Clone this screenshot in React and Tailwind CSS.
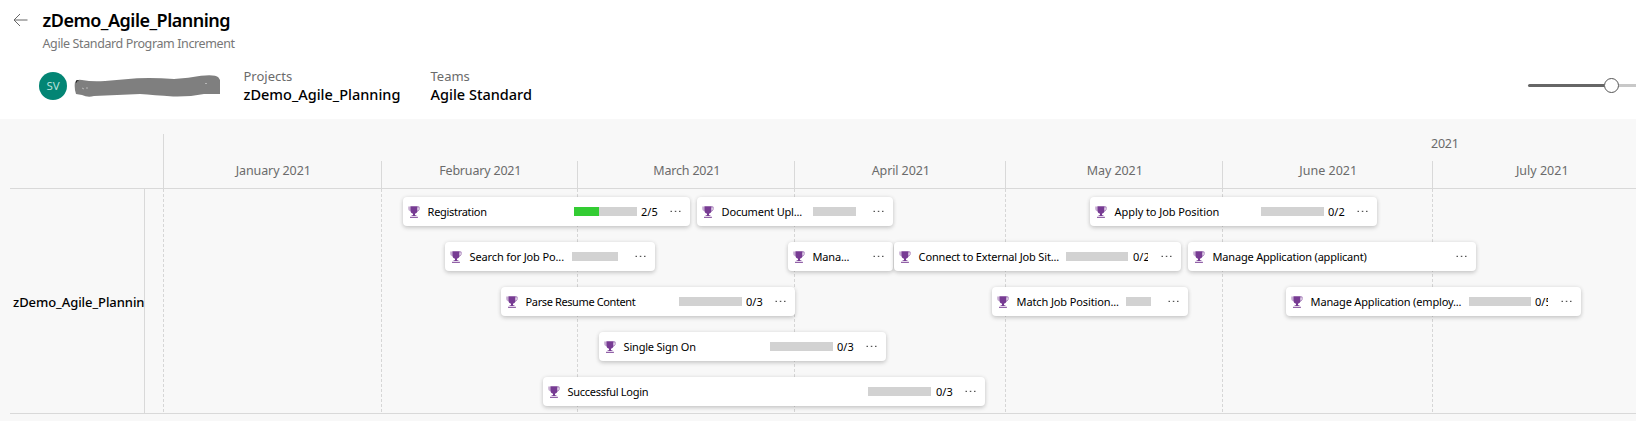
import React from "react";

const months = [
  { name: "January 2021", tracking: "tracking-[-0.11px]" },
  { name: "February 2021", tracking: "tracking-[-0.19px]" },
  { name: "March 2021", tracking: "tracking-[-0.18px]" },
  { name: "April 2021", tracking: "tracking-[-0.11px]" },
  { name: "May 2021", tracking: "tracking-[-0.07px]" },
  { name: "June 2021", tracking: "tracking-normal" },
  { name: "July 2021", tracking: "tracking-normal" },
];

const monthGrid = "grid grid-cols-[218px_196px_217px_211px_217px_210px_218px]";

const rows = [
  [
    { title: "Registration", box: "ml-[258px] w-[287px]", bar: "mr-1 w-[63px]", fill: "w-[25px]", count: "2/5", slot: "w-4", track: "tracking-[-0.3px]" },
    { title: "Document Upl...", box: "ml-[7px] w-[196px]", bar: "mr-1 w-[43px]", track: "tracking-[-0.2px]" },
    { title: "Apply to Job Position", box: "ml-[197px] w-[287px]", bar: "mr-1 w-[63px]", count: "0/2", slot: "w-4", track: "tracking-[-0.08px]" },
  ],
  [
    { title: "Search for Job Po...", box: "ml-[300px] w-[210px]", bar: "mr-1 w-[46px]", track: "tracking-[-0.13px]" },
    { title: "Mana...", box: "ml-[133px] w-[105px]", track: "tracking-[-0.2px]" },
    { title: "Connect to External Job Sit...", box: "ml-px w-[287px]", bar: "mr-[5px] w-[62px]", count: "0/2", slot: "w-[15px] overflow-hidden", track: "tracking-[-0.16px]" },
    { title: "Manage Application (applicant)", box: "ml-[7px] w-[288px]", track: "tracking-[-0.2px]" },
  ],
  [
    { title: "Parse Resume Content", box: "ml-[356px] w-[294px]", bar: "mr-1 w-[63px]", count: "0/3", slot: "w-4", track: "tracking-[-0.39px]" },
    { title: "Match Job Position...", box: "ml-[197px] w-[196px]", bar: "mr-1 w-[25px]", track: "tracking-[-0.12px]" },
    { title: "Manage Application (employ...", box: "ml-[98px] w-[295px]", bar: "mr-1 w-[62px]", count: "0/5", slot: "w-[13px] overflow-hidden", track: "tracking-[-0.17px]" },
  ],
  [{ title: "Single Sign On", box: "ml-[454px] w-[287px]", bar: "mr-1 w-[63px]", count: "0/3", slot: "w-4", track: "tracking-[-0.2px]" }],
  [{ title: "Successful Login", box: "ml-[398px] w-[442px]", bar: "mr-[5px] w-[63px]", count: "0/3", slot: "w-4", track: "tracking-[-0.29px]" }],
];

function Trophy() {
  return (
    <svg className="h-3 w-3 shrink-0" viewBox="0 0 12 12" fill="none">
      <path d="M0.2 0.4H2.8V5.3C1.2 5 0.2 4.2 0.2 2.8z" fill="#773b93" fillOpacity="0.42" />
      <path d="M9 0.9h2.1V3c0 1.3-.8 1.9-2.3 2.3" stroke="#773b93" strokeOpacity="0.65" />
      <path d="M2.5 0.3H9.4V4.8C9.4 6.5 8.5 7.3 7 7.8V9.3H8.4V10H3.6V9.3H5V7.8C3.5 7.3 2.5 6.5 2.5 4.8z" fill="#773b93" />
      <path d="M2 10.8H9.9V11.8H2z" fill="#773b93" />
    </svg>
  );
}

function Card({ item }) {
  return (
    <article className={`flex h-[29px] shrink-0 items-center rounded-[4px] bg-white pr-[9.5px] pl-[5px] shadow-[0_2px_4px_rgba(0,0,0,0.17),0_0_4px_rgba(0,0,0,0.08)] ${item.box}`}>
      <Trophy />
      <span className={`ml-[7.6px] flex-1 text-[11px] leading-[18px] whitespace-nowrap text-black ${item.track}`}>{item.title}</span>
      {item.bar && (
        <div className={`h-[9px] shrink-0 bg-[#d2d2d2] ${item.bar}`}>
          {item.fill && <div className={`h-full bg-[#33cc33] ${item.fill}`} />}
        </div>
      )}
      {item.count && <span className={`shrink-0 text-[11px] leading-[18px] text-black ${item.slot}`}>{item.count}</span>}
      <svg className="ml-[12.5px] h-[3px] w-[11px] shrink-0" viewBox="0 0 11 3" fill="#444">
        <rect x="0.5" y="0.8" width="1.5" height="1.1" />
        <rect x="4.8" y="0.8" width="1.5" height="1.1" />
        <rect x="9" y="0.8" width="1.5" height="1.1" />
      </svg>
    </article>
  );
}

function Field({ label, value, width }) {
  return (
    <div className={width}>
      <div className="text-[13px] leading-[18px] text-[#6b6b6b]">{label}</div>
      <div className="text-[14.5px] leading-[18px] font-medium whitespace-nowrap text-black">{value}</div>
    </div>
  );
}

export default function App() {
  return (
    <div className="flex h-[421px] w-full flex-col overflow-hidden bg-white font-['Noto_Sans',sans-serif]">
      <header className="h-[119px] shrink-0 pt-2">
        <div className="flex">
          <svg className="mt-[5px] ml-[13px] h-[14px] w-[15px] shrink-0" viewBox="0 0 15 14" fill="none" stroke="#666" strokeWidth="1">
            <path d="M14.5 7H1M7 1L1 7l6 6" />
          </svg>
          <div className="ml-[14.5px]">
            <h1 className="text-[18px] leading-6 font-semibold tracking-[-0.5px] text-black">zDemo_Agile_Planning</h1>
            <p className="mt-1 text-[12.5px] leading-4 tracking-[-0.39px] text-[#777]">Agile Standard Program Increment</p>
          </div>
        </div>
        <div className="mt-[15px] flex">
          <div className="mt-[4.5px] ml-[39px] flex h-7 w-7 items-center justify-center rounded-full bg-[#038574] text-[11.5px] text-[#b9e0da]">SV</div>
          <svg className="mt-2 ml-[7px] h-[23px] w-[146px] shrink-0" viewBox="0 0 146 23">
            <path d="M1 7Q3 4 8 5Q18 7 31 6L63 3.3Q80 2.5 100 4Q115 3 127 .8Q141-.8 144.5 2.4L146 5V19H130Q115 22 99 21.5Q80 20 66 19L20 21Q14 23 8 20L2 19Q0 13 1 7Z" fill="#7f7f7f" />
            <path d="M8 13l2 1m2-1h2M131 8.5h2" fill="none" stroke="#c5c5c5" strokeWidth="0.8" />
            <path d="M2.5 7.5V5.7h2" fill="none" stroke="#222" />
          </svg>
          <div className="ml-[23.5px] flex">
            <Field label="Projects" value="zDemo_Agile_Planning" width="w-[187px]" />
            <Field label="Teams" value="Agile Standard" width="w-[110px]" />
          </div>
          <div className="mt-[10px] ml-auto flex h-[17px] w-[108px] items-center">
            <div className="h-[3px] w-[76px] rounded-l-full bg-[#666]" />
            <div className="h-[15px] w-[15px] shrink-0 rounded-full border border-[#555] bg-white" />
            <div className="h-[3px] flex-1 bg-[#c8c8c8]" />
          </div>
        </div>
      </header>

      <main className="flex-1 bg-[#f8f8f8] pl-[10px]">
        <div className="h-[70px] overflow-hidden border-b border-[#d9d9d9] pt-[15px] pl-[153px] text-[12.5px] leading-[20px] text-[#6b6b6b]">
          <div className="h-[27px] border-l border-[#d9d9d9] pl-[1267px] tracking-[-0.27px]">2021</div>
          <div className={`h-[27px] ${monthGrid}`}>
            {months.map((m) => (
              <div key={m.name} className={`border-l border-[#d9d9d9] pl-[1.5px] text-center ${m.tracking}`}>{m.name}</div>
            ))}
          </div>
        </div>
        <div className="flex h-[225px] border-b border-[#d9d9d9]">
          <div className="flex w-[135px] shrink-0 items-center overflow-hidden border-r border-[#d9d9d9] pt-px pl-[3px] text-[13px] leading-[18px] font-medium text-black">
            <span className="tracking-[-0.06px]">zDemo_Agile_Planning</span>
          </div>
          <div className="grid flex-1 grid-cols-[minmax(0,1fr)] grid-rows-[224px] overflow-hidden">
            <div className={`col-start-1 row-start-1 ml-[18px] ${monthGrid}`}>
              {months.map((m) => (
                <div key={m.name} className="w-px bg-[repeating-linear-gradient(to_bottom,#d6d6d6_0,#d6d6d6_3px,transparent_3px,transparent_5px)]" />
              ))}
            </div>
            <div className="z-10 col-start-1 row-start-1 flex flex-col gap-4 pt-2">
              {rows.map((items, i) => (
                <div key={i} className="flex">
                  {items.map((item) => (
                    <Card key={item.title} item={item} />
                  ))}
                </div>
              ))}
            </div>
          </div>
        </div>
      </main>
    </div>
  );
}
